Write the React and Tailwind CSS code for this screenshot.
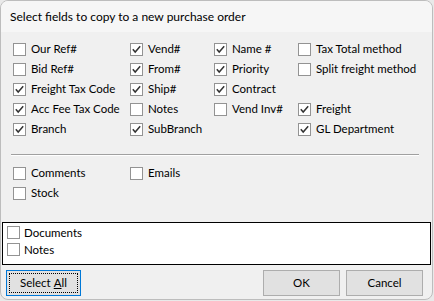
import { useState } from "react"

const font = { fontFamily: "Lato, 'Noto Sans', sans-serif" }

function Box({ checked }) {
  return (
    <span className="flex h-[13px] w-[13px] shrink-0 items-center justify-center border border-[#939393] bg-white">
      {checked && (
        <svg width="11" height="11" viewBox="0 0 11 11">
          <path d="M1.8 5.2 L4.2 8 L9.2 2.2" fill="none" stroke="#333" strokeWidth="1.5" />
        </svg>
      )}
    </span>
  )
}

function Check({ label, checked, onToggle }) {
  return (
    <label className="flex h-[20px] cursor-default items-center gap-[5px]" onClick={onToggle}>
      <Box checked={checked} />
      <span className="whitespace-nowrap text-[11.5px] text-black">{label}</span>
    </label>
  )
}

const initial = [
  ["Our Ref#", false], ["Vend#", true], ["Name #", true], ["Tax Total method", false],
  ["Bid Ref#", false], ["From#", true], ["Priority", true], ["Split freight method", false],
  ["Freight Tax Code", true], ["Ship#", true], ["Contract", true], null,
  ["Acc Fee Tax Code", true], ["Notes", false], ["Vend Inv#", false], ["Freight", true],
  ["Branch", true], ["SubBranch", true], null, ["GL Department", true],
]

export default function App() {
  const [fields, setFields] = useState(initial)
  const [extra, setExtra] = useState({ Comments: false, Emails: false, Stock: false, Documents: false, Notes: false })

  const toggle = (i) =>
    setFields((f) => f.map((x, j) => (j === i && x ? [x[0], !x[1]] : x)))
  const flip = (k) => setExtra((e) => ({ ...e, [k]: !e[k] }))

  return (
    <div className="h-[301px] w-[434px] bg-[#e9e9e9]" style={font}>
      <div className="flex h-[300px] w-[433px] flex-col overflow-hidden rounded-[8px] border border-[#bdbdbd] bg-[#f0f0f0]">
        <div className="flex h-[31px] shrink-0 items-center bg-[#f6f6f6] pl-[9px] text-[12px] text-black">
          Select fields to copy to a new purchase order
        </div>

        <div className="grid grid-cols-[117px_84px_84px_1fr] pl-[12px] pt-[7px]">
          {fields.map((f, i) =>
            f ? (
              <Check key={i} label={f[0]} checked={f[1]} onToggle={() => toggle(i)} />
            ) : (
              <div key={i} className="h-[20px]" />
            )
          )}
        </div>

        <div className="ml-[10px] mr-[13px] mt-[15px] h-[2px] border-t border-b border-t-[#a0a0a0] border-b-white" />

        <div className="grid grid-cols-[117px_1fr] pl-[12px] pt-[7px]">
          <Check label="Comments" checked={extra.Comments} onToggle={() => flip("Comments")} />
          <Check label="Emails" checked={extra.Emails} onToggle={() => flip("Emails")} />
          <Check label="Stock" checked={extra.Stock} onToggle={() => flip("Stock")} />
        </div>

        <div className="ml-[1px] mr-[1px] mt-[19px] h-[43px] border border-black bg-white pl-[4px] pt-[1px]">
          <div className="flex h-[17px] items-center gap-[4px]">
            <Box checked={extra.Documents} />
            <span className="text-[11.5px] text-black">Documents</span>
          </div>
          <div className="flex h-[17px] items-center gap-[4px]">
            <Box checked={extra.Notes} />
            <span className="text-[11.5px] text-black">Notes</span>
          </div>
        </div>

        <div className="flex items-center px-[5px] pt-[5px]">
          <button
            type="button"
            className="flex h-[26px] w-[75px] items-center justify-center border border-[#0078d7] bg-[#e1e1e1] p-[2px] text-[11.5px] text-black"
          >
            <span className="flex h-full w-full items-center justify-center border border-dotted border-black">
              Select <span className="ml-[3px] underline">A</span>ll
            </span>
          </button>
          <div className="ml-auto flex gap-[6px] pr-[4px]">
            <button type="button" className="h-[26px] w-[77px] border border-[#adadad] bg-[#e1e1e1] text-[11.5px] text-black">
              OK
            </button>
            <button type="button" className="h-[26px] w-[77px] border border-[#adadad] bg-[#e1e1e1] text-[11.5px] text-black">
              Cancel
            </button>
          </div>
        </div>
      </div>
    </div>
  )
}
